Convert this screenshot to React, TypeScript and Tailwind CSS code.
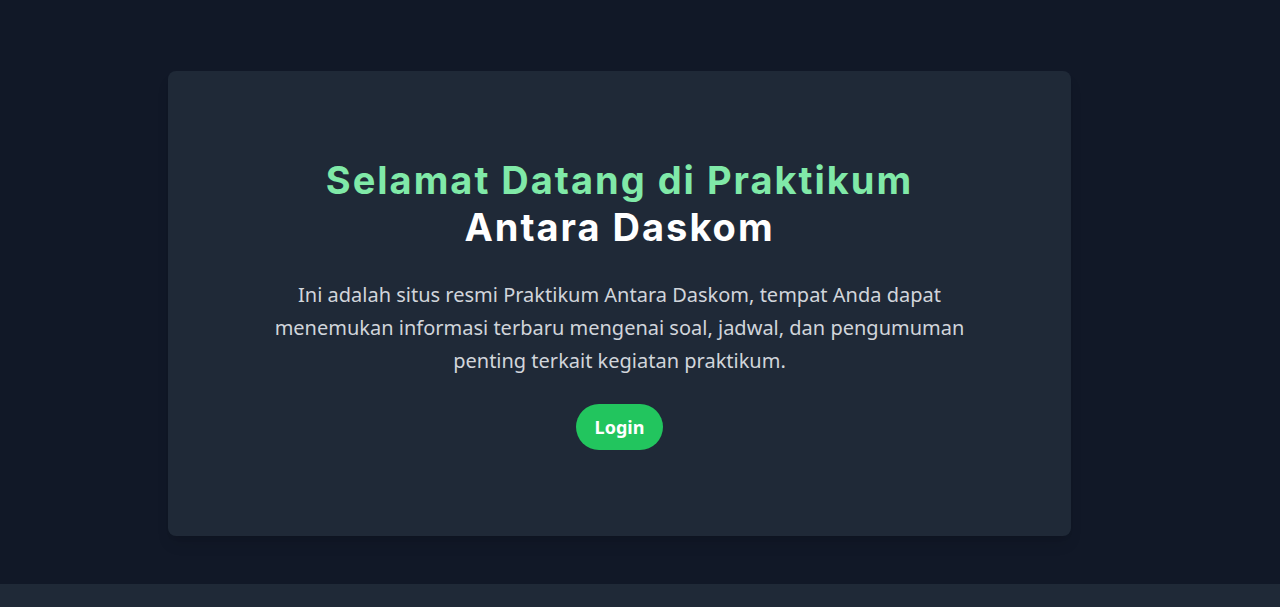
export default function App() {
  return (
    <div className="min-h-screen bg-[#111827] font-['Noto_Sans',sans-serif]">
      {/* Hero */}
      <main className="h-[584px] pt-[71px]">
        <div className="ml-[168px] w-[903px] h-[465px] rounded-lg bg-[#1f2937] shadow-lg flex flex-col items-center justify-center text-center">
          <h1 className="font-['Inter',sans-serif] text-[38px] leading-[47px] font-bold tracking-[2px] mb-[27px]">
            <span className="block text-[#80e9a8]">Selamat Datang di Praktikum</span>
            <span className="block text-white">Antara Daskom</span>
          </h1>
          <p className="w-[720px] text-[20px] leading-[33px] text-[#d1d5db] mb-[27px]">
            Ini adalah situs resmi Praktikum Antara Daskom, tempat Anda dapat menemukan informasi terbaru mengenai soal, jadwal, dan pengumuman penting terkait kegiatan praktikum.
          </p>
          <button className="h-[46px] w-[87px] rounded-full bg-[#22c55e] text-white text-[18px] font-bold">
            Login
          </button>
        </div>
      </main>

      {/* Footer */}
      <footer className="h-[23px] bg-[#1f2937]" />
    </div>
  )
}
